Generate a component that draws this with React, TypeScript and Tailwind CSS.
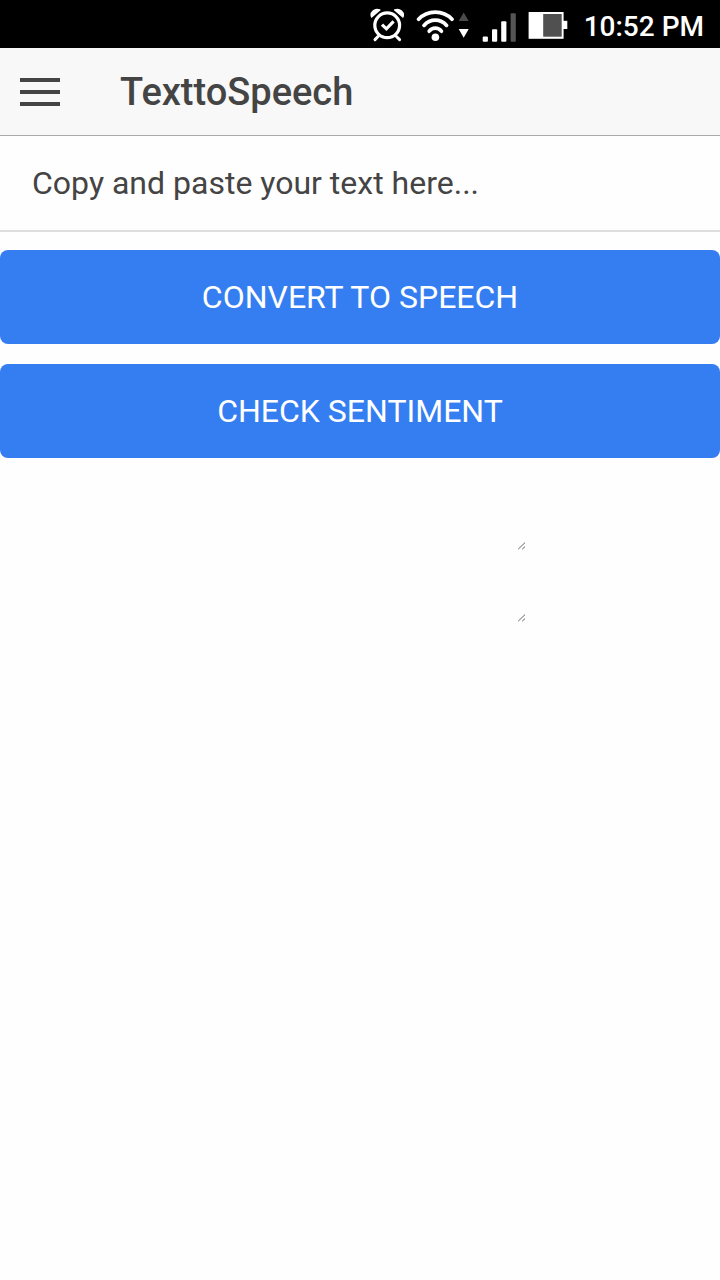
function AlarmIcon() {
  return (
    <svg width="36" height="36" viewBox="369 7 36 36" fill="none" stroke="#fff" strokeLinecap="round">
      <circle cx="387.2" cy="25.3" r="12.4" strokeWidth="3.2" />
      <path d="M382 24.6 L386.4 28.8 L393.6 21.4" strokeWidth="3.2" strokeLinecap="butt" />
      <path d="M378 36.5 L375 39.6 M396.4 36.5 L399.6 39.6" strokeWidth="3" />
      <path d="M371.6 17 C369.8 12.5 374.5 7.9 379.8 10 Z M402.9 17 C404.7 12.5 400 7.9 394.7 10 Z" fill="#fff" strokeWidth="1.4" strokeLinejoin="round" />
    </svg>
  );
}

function WifiIcon() {
  return (
    <svg width="54" height="36" viewBox="416 7 54 36" fill="none">
      <g stroke="#fff" strokeWidth="3.7" strokeLinecap="round">
        <path d="M418.6 19.2 C427.5 9.7 443.1 9.7 452 19.2" />
        <path d="M424 25.4 C430.2 18.4 440.4 18.4 446.6 25.4" />
        <path d="M429.2 31.2 C432.4 27.2 438.2 27.2 441.4 31.2" />
      </g>
      <circle cx="435.4" cy="37.2" r="3.8" fill="#fff" />
      <path d="M463.7 12.5 L468.7 21 H458.7 Z" fill="#4a4a4a" />
      <path d="M463.7 37.8 L468.7 29 H458.7 Z" fill="#fff" />
    </svg>
  );
}

function SignalIcon() {
  return (
    <svg width="36" height="36" viewBox="481 7 36 36" fill="#fff">
      <rect x="482.7" y="36.5" width="5.2" height="5.3" rx="1" />
      <rect x="492" y="29.3" width="5.2" height="12.5" rx="1" />
      <rect x="501.2" y="21.2" width="5.2" height="20.6" rx="1" />
      <rect x="510.6" y="13.2" width="5.2" height="28.6" rx="1" fill="#555" />
    </svg>
  );
}

function BatteryIcon() {
  return (
    <svg width="40" height="36" viewBox="528 7 40 36" fill="#fff">
      <rect x="528.6" y="12" width="35" height="26.8" />
      <rect x="563" y="20.8" width="4.3" height="8.2" />
      <rect x="543.2" y="14" width="18.5" height="22.7" fill="#505050" />
    </svg>
  );
}

function ResizeGrip() {
  return (
    <svg width="10" height="10" viewBox="0 0 10 10" stroke="#666" strokeWidth="1">
      <path d="M1.2 8.2 L8 1.6 M5.2 8.2 L8 5.6" />
    </svg>
  );
}

function ActionButton({ label }: { label: string }) {
  return (
    <button className="flex h-[94px] w-full items-center justify-center rounded-lg bg-[#357ef2] text-[32px] leading-none text-white uppercase">
      {label}
    </button>
  );
}

export default function App() {
  return (
    <div className="flex h-[1280px] w-[720px] flex-col overflow-hidden bg-[#fefefe] font-['Roboto',sans-serif] text-[#444]">
      <div className="flex h-12 shrink-0 items-center bg-black pt-0.5 pr-4 pl-[369px] text-white">
        <div className="flex gap-[11px]">
          <AlarmIcon />
          <WifiIcon />
          <SignalIcon />
          <BatteryIcon />
        </div>
        <span className="ml-auto pt-[3px] text-[28px] leading-none font-medium whitespace-nowrap">10:52 PM</span>
      </div>
      <header className="flex h-[88px] shrink-0 items-center border-b border-[#aaa] bg-[#f8f8f8] pl-5">
        <button aria-label="Menu" className="flex w-10 flex-col gap-2">
          <span className="h-1 bg-[#444]" />
          <span className="h-1 bg-[#444]" />
          <span className="h-1 bg-[#444]" />
        </button>
        <h1 className="ml-[60px] text-[38px] leading-none font-medium">TexttoSpeech</h1>
      </header>
      <div className="flex h-24 shrink-0 items-center border-b-2 border-[#ddd] px-8 text-[32px] leading-none">
        Copy and paste your text here...
      </div>
      <main className="flex flex-col gap-5 pt-[18px]">
        <ActionButton label="Convert to Speech" />
        <ActionButton label="Check Sentiment" />
        <div className="flex flex-col gap-[62px] pt-[63px] pl-[517px]">
          <ResizeGrip />
          <ResizeGrip />
        </div>
      </main>
    </div>
  );
}
